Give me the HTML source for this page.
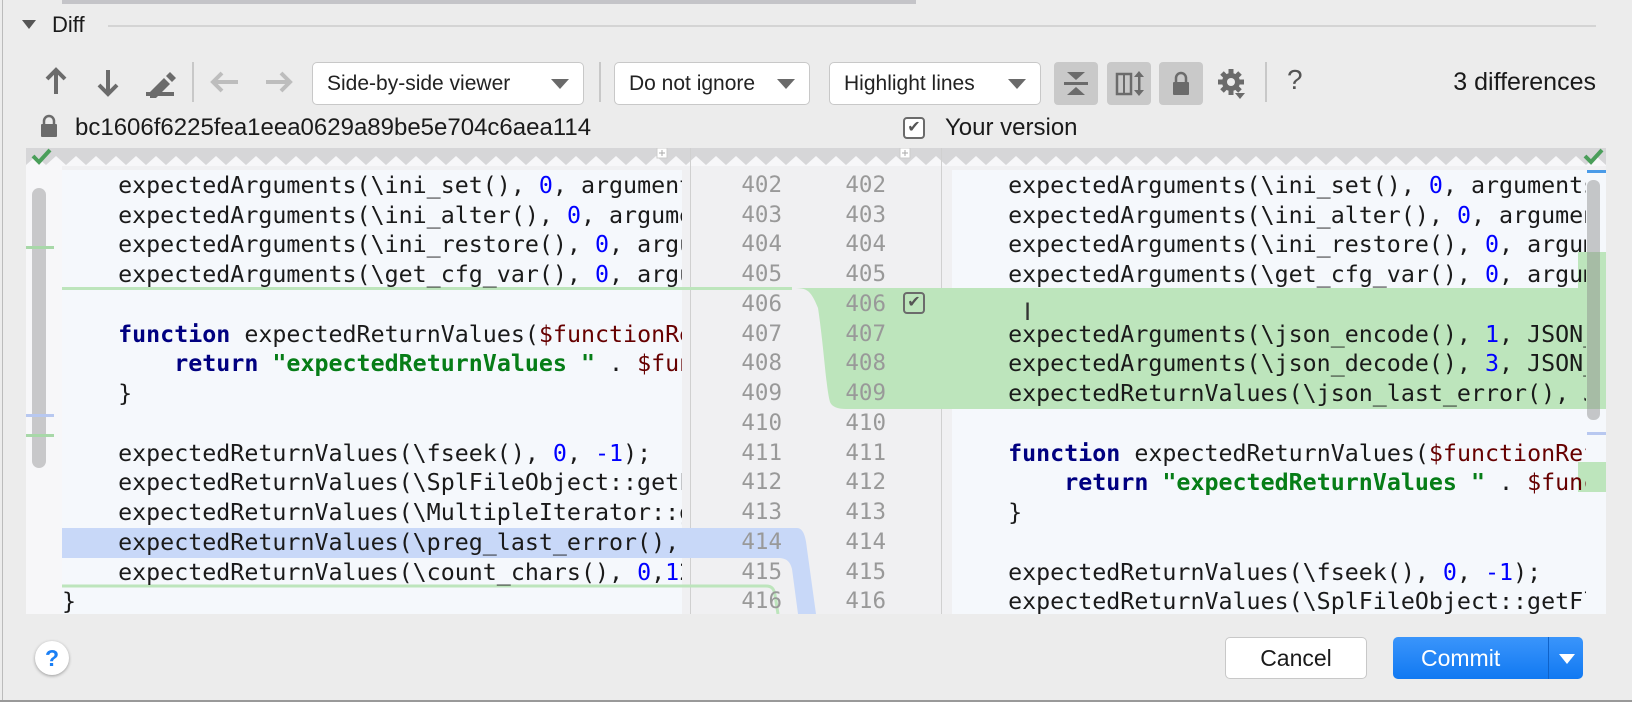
<!DOCTYPE html>
<html><head><meta charset="utf-8"><style>
*{margin:0;padding:0;box-sizing:border-box}
body{width:1632px;height:702px;overflow:hidden;background:#ececec;font-family:"Liberation Sans",sans-serif;position:relative;color:#1a1a1a}
.abs{position:absolute}
.dd{position:absolute;top:62px;height:43px;background:#fff;border:1px solid #c8c8c8;border-radius:5px;font-size:21px;line-height:41px;padding-left:14px;color:#222}
.dd:after{content:"";position:absolute;right:14px;top:16px;border-left:9px solid transparent;border-right:9px solid transparent;border-top:10px solid #6a6a6a}
.tg{position:absolute;top:62px;width:44px;height:43px;background:#c9c9c9;border-radius:4px}
.code{position:absolute;font-family:"DejaVu Sans Mono","Liberation Mono",monospace;font-size:23.3px;letter-spacing:0;white-space:normal;overflow:hidden}
.code div{height:29.74px;line-height:29.74px;white-space:pre}
.k{color:#000080;font-weight:bold}.s{color:#067d17;font-weight:bold}.n{color:#0000ff}.v{color:#660000}
.ln{position:absolute;font-family:"DejaVu Sans Mono",monospace;font-size:22.5px;color:#999;text-align:right;width:44px}
.ln div{height:29.74px;line-height:29.74px}
</style></head><body>
<div class="abs" style="left:62px;top:0;width:854px;height:4px;background:#c4c4c8"></div>
<div class="abs" style="left:2px;top:0;width:1px;height:700px;background:#bbb"></div>
<div class="abs" style="left:0;top:700px;width:1632px;height:2px;background:#999"></div>
<div class="abs" style="left:22px;top:20px;border-left:7px solid transparent;border-right:7px solid transparent;border-top:9px solid #555"></div>
<div class="abs" style="left:52px;top:12px;font-size:22px">Diff</div>
<div class="abs" style="left:108px;top:25px;width:1488px;height:2px;background:#d4d4d4"></div>

<svg class="abs" style="left:0;top:50px" width="320" height="60">
<g stroke="#6b6b6b" stroke-width="4" fill="none" stroke-linecap="butt">
<path d="M56 44V20M47 29l9-9 9 9"/><path d="M108 20v24M99 35l9 9 9-9"/></g>
<path d="M150 42l14-14 6 6-14 14h-6z M166 26l4-4 6 6-4 4z" fill="#6b6b6b"/>
<rect x="146" y="42" width="28" height="4" fill="#6b6b6b"/>
<rect x="192" y="12" width="2" height="40" fill="#c8c8c8"/>
<g stroke="#bdbdbd" stroke-width="4" fill="none"><path d="M238 32h-24M222 23l-9 9 9 9"/><path d="M266 32h24M281 23l9 9-9 9"/></g>
</svg>
<div class="dd" style="left:312px;width:272px">Side-by-side viewer</div>
<div class="abs" style="left:599px;top:62px;width:2px;height:40px;background:#c8c8c8"></div>
<div class="dd" style="left:614px;width:196px">Do not ignore</div>
<div class="dd" style="left:829px;width:212px">Highlight lines</div>
<div class="tg" style="left:1054px"></div><div class="tg" style="left:1107px"></div><div class="tg" style="left:1159px"></div>
<svg class="abs" style="left:1054px;top:62px" width="160" height="43">
<g fill="#6b6b6b"><path d="M13 10h18l-9 8z M13 33h18l-9-8z"/><rect x="10" y="20" width="24" height="3"/>
<rect x="63" y="12" width="14" height="20" fill="none" stroke="#6b6b6b" stroke-width="2.5"/><rect x="69" y="12" width="2" height="20"/>
<path d="M85 9l-5 6h10z M85 34l-5-6h10z"/><rect x="84" y="12" width="2.5" height="20"/>
<rect x="119" y="20" width="16" height="13" rx="1"/><path d="M122 20v-4a5 5 0 0 1 10 0v4" fill="none" stroke="#6b6b6b" stroke-width="2.5"/></g>
</svg>
<svg class="abs" style="left:1213px;top:62px" width="40" height="43">
<g fill="#6b6b6b"><circle cx="18" cy="20" r="9"/><g stroke="#6b6b6b" stroke-width="5"><path d="M18 7v26M5 20h26M9 11l18 18M27 11l-18 18"/></g><circle cx="18" cy="20" r="4" fill="#ececec"/><path d="M22 31h10l-5 6z"/></g>
</svg>
<div class="abs" style="left:1265px;top:62px;width:2px;height:40px;background:#c8c8c8"></div>
<div class="abs" style="left:1287px;top:64px;font-size:28px;color:#555">?</div>
<div class="abs" style="left:1400px;top:68px;font-size:25px;width:196px;text-align:right">3 differences</div>

<svg class="abs" style="left:40px;top:114px" width="18" height="24"><rect x="1" y="10" width="16" height="13" rx="1" fill="#6b6b6b"/><path d="M4 11V7a5 5 0 0 1 10 0v4" fill="none" stroke="#6b6b6b" stroke-width="2.5"/></svg>
<div class="abs" style="left:75px;top:114px;font-size:24px">bc1606f6225fea1eea0629a89be5e704c6aea114</div>
<div class="abs" style="left:903px;top:117px;width:22px;height:22px;border:2px solid #6b6b6b;border-radius:4px;background:#fff;font-size:16px;line-height:18px;text-align:center;color:#555">✔</div>
<div class="abs" style="left:945px;top:114px;font-size:24px">Your version</div>

<div class="abs" style="left:26px;top:148px;width:1580px;height:466px;background:#f0f0f2;overflow:hidden">
 <svg class="abs" style="left:0;top:0" width="1580" height="20"><defs><pattern id="z" width="20" height="20" patternUnits="userSpaceOnUse"><rect width="20" height="20" fill="#d6d6d8"/><path d="M0 17L10 8 20 17V20H0z" fill="#f7f7f9"/></pattern></defs><rect width="1580" height="18" fill="url(#z)"/></svg>
 <div class="abs" style="left:0;top:18px;width:36px;height:448px;background:#f7f7f9"></div>
 <div class="abs" style="left:36px;top:22px;width:620px;height:444px;background:#f5f8fc"></div>
 <div class="abs" style="left:664px;top:0;width:1px;height:466px;background:#d0d0d0"></div>
 <div class="abs" style="left:915px;top:0;width:1px;height:466px;background:#d0d0d0"></div>
 <div class="abs" style="left:926px;top:22px;width:654px;height:444px;background:#f5f8fc"></div>
 <div class="abs" style="left:6px;top:40px;width:14px;height:280px;background:#c8c8ca;border-radius:7px"></div>
 <div class="abs" style="left:0;top:98px;width:28px;height:3px;background:#a8d8a8"></div>
 <div class="abs" style="left:0;top:266px;width:28px;height:3px;background:#b8c8f0"></div>
 <div class="abs" style="left:0;top:286px;width:28px;height:3px;background:#a8d8a8"></div>
 <svg class="abs" style="left:4px;top:-2px" width="24" height="20"><path d="M3 10l6 6 11-12" stroke="#4a9e5a" stroke-width="4" fill="none"/></svg>
 <svg class="abs" style="left:1556px;top:-2px" width="24" height="20"><path d="M3 10l6 6 11-12" stroke="#4a9e5a" stroke-width="4" fill="none"/></svg>
 <svg class="abs" style="left:0;top:0" width="1580" height="466">
  <rect x="36" y="139" width="730" height="3" fill="#bde5bc"/>
  <path d="M764 140C780 140 784 140 792 160C798 200 800 240 804 254C806 259 812 261 820 261H1580V140Z" fill="#bde5bc"/>
  <rect x="36" y="380" width="620" height="30" fill="#c8d8f8"/>
  <path d="M656 380H771C778 380 780 391 781 401L790 466H772L766 421C764 413 760 410 752 410H656Z" fill="#c8d8f8"/>
  <path d="M36 438H740C746 438 748 441 749 447L752 466" stroke="#bde5bc" stroke-width="3" fill="none"/>
  <rect x="1552" y="104" width="28" height="46" fill="#bde5bc"/>
  <rect x="1552" y="314" width="28" height="30" fill="#bde5bc"/>
  <rect x="1561" y="22" width="19" height="3" fill="#4a9be8"/>
  <rect x="1561" y="284" width="19" height="3" fill="#b8c8f0"/>
  <rect x="1561" y="32" width="13" height="240" rx="6" fill="#8a8a8a" opacity=".45"/>
  <rect x="631" y="0" width="10" height="10" fill="#fff" stroke="#ccc"/><path d="M636 2v6M633 5h6" stroke="#aaa"/>
  <rect x="874" y="0" width="10" height="10" fill="#fff" stroke="#ccc"/><path d="M879 2v6M876 5h6" stroke="#aaa"/>
 </svg>
 <div class="abs" style="left:877px;top:144px;width:22px;height:22px;border:2px solid #6b6b6b;border-radius:4px;font-size:16px;line-height:18px;text-align:center;color:#555">✔</div>
 <div class="ln" style="left:712px;top:23px"><div>402</div><div>403</div><div>404</div><div>405</div><div>406</div><div>407</div><div>408</div><div>409</div><div>410</div><div>411</div><div>412</div><div>413</div><div>414</div><div>415</div><div>416</div></div>
 <div class="ln" style="left:816px;top:23px"><div>402</div><div>403</div><div>404</div><div>405</div><div>406</div><div>407</div><div>408</div><div>409</div><div>410</div><div>411</div><div>412</div><div>413</div><div>414</div><div>415</div><div>416</div></div>
 <div class="code" style="left:36px;top:23px;width:620px;height:443px"><div>    expectedArguments(\ini_set(), <span class="n">0</span>, argumentsSet</div><div>    expectedArguments(\ini_alter(), <span class="n">0</span>, arguments</div><div>    expectedArguments(\ini_restore(), <span class="n">0</span>, arguments</div><div>    expectedArguments(\get_cfg_var(), <span class="n">0</span>, arguments</div><div> </div><div>    <span class="k">function</span> expectedReturnValues(<span class="v">$functionReference</span></div><div>        <span class="k">return</span> <span class="s">"expectedReturnValues "</span> . <span class="v">$functionRef</span></div><div>    }</div><div> </div><div>    expectedReturnValues(\fseek(), <span class="n">0</span>, <span class="n">-1</span>);</div><div>    expectedReturnValues(\SplFileObject::getFlags</div><div>    expectedReturnValues(\MultipleIterator::getFlags</div><div>    expectedReturnValues(\preg_last_error(), JSON</div><div>    expectedReturnValues(\count_chars(), <span class="n">0</span>,<span class="n">1</span>23</div><div>}</div></div>
 <div class="code" style="left:926px;top:23px;width:634px;height:443px"><div>    expectedArguments(\ini_set(), <span class="n">0</span>, argumentsSet</div><div>    expectedArguments(\ini_alter(), <span class="n">0</span>, arguments</div><div>    expectedArguments(\ini_restore(), <span class="n">0</span>, arguments</div><div>    expectedArguments(\get_cfg_var(), <span class="n">0</span>, arguments</div><div> </div><div>    expectedArguments(\json_encode(), <span class="n">1</span>, JSON_HEX_TAG</div><div>    expectedArguments(\json_decode(), <span class="n">3</span>, JSON_BIGINT</div><div>    expectedReturnValues(\json_last_error(), JSON_</div><div> </div><div>    <span class="k">function</span> expectedReturnValues(<span class="v">$functionReference</span></div><div>        <span class="k">return</span> <span class="s">"expectedReturnValues "</span> . <span class="v">$functionRef</span></div><div>    }</div><div> </div><div>    expectedReturnValues(\fseek(), <span class="n">0</span>, <span class="n">-1</span>);</div><div>    expectedReturnValues(\SplFileObject::getFlags</div></div>
 <div class="abs" style="left:998px;top:150px;font-size:24px;color:#333;font-family:'DejaVu Sans',sans-serif">I</div>
</div>

<div class="abs" style="left:35px;top:641px;width:34px;height:34px;border-radius:50%;background:#fff;box-shadow:0 1px 3px rgba(0,0,0,.35);color:#1a7ff5;font-size:23px;font-weight:bold;text-align:center;line-height:34px">?</div>
<div class="abs" style="left:1225px;top:637px;width:142px;height:42px;background:#fff;border:1px solid #c8c8c8;border-radius:5px;font-size:23px;text-align:center;line-height:40px">Cancel</div>
<div class="abs" style="left:1393px;top:637px;width:190px;height:42px;background:linear-gradient(#3a95fb,#1179f2);border-radius:5px;color:#fff;font-size:23px;line-height:42px;padding-left:28px">Commit</div>
<div class="abs" style="left:1548px;top:637px;width:1px;height:42px;background:#0f62c8"></div>
<div class="abs" style="left:1559px;top:654px;border-left:8px solid transparent;border-right:8px solid transparent;border-top:10px solid #fff"></div>
</body></html>
